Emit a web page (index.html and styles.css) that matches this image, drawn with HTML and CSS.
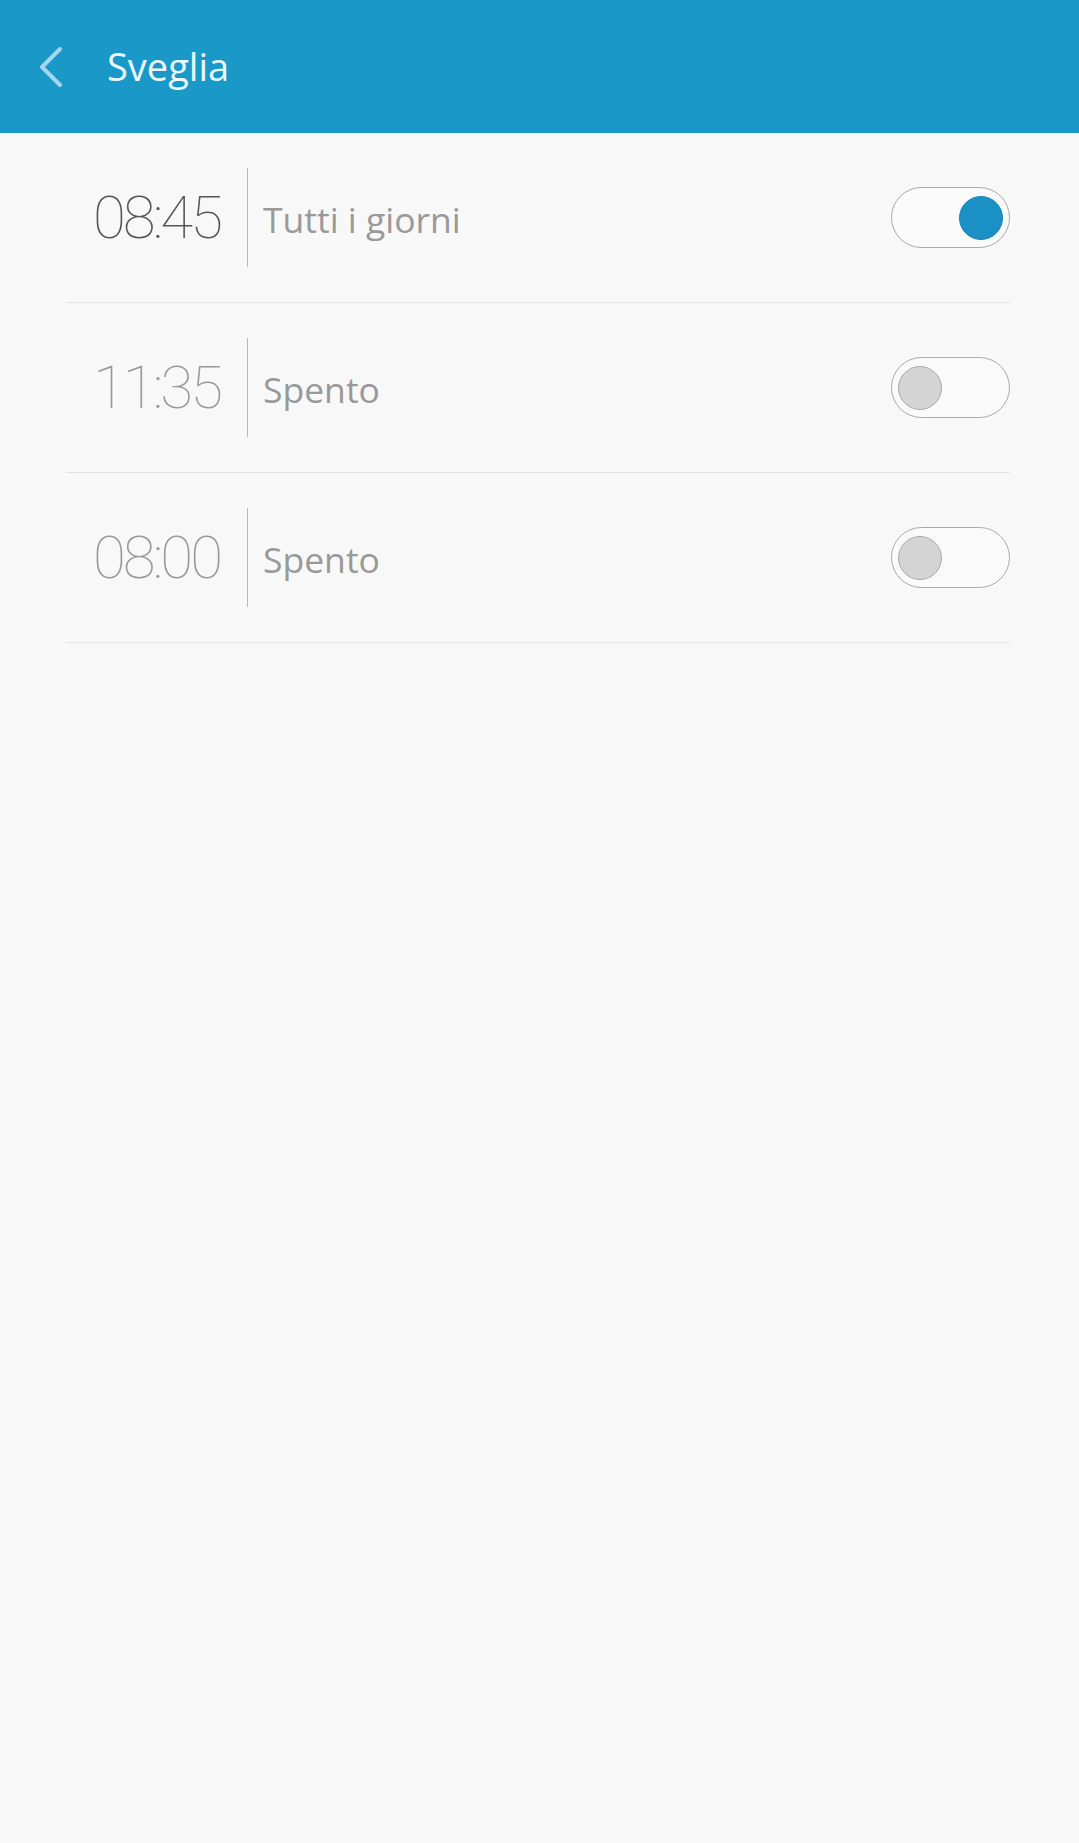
FILE: index.html
```html
<!DOCTYPE html>
<html lang="it">
<head>
    <meta charset="UTF-8">
    <meta name="viewport" content="width=device-width, initial-scale=1.0">
    <title>Sveglia</title>
    <link rel="stylesheet" href="styles.css">
</head>

<body>
    <header class="topbar">
        <button class="back" aria-label="Indietro">
            <svg width="30" height="44" viewBox="0 0 30 44">
                <polyline points="24,4 6,22 24,40" fill="none" stroke="#a6d6ef" stroke-width="4" stroke-linecap="round" stroke-linejoin="round"/>
            </svg>
        </button>
        <h1>Sveglia</h1>
    </header>

    <ul class="alarms">
        <li class="alarm on">
            <span class="time">08:45</span>
            <span class="divider"></span>
            <span class="label">Tutti i giorni</span>
            <span class="switch"><span class="knob"></span></span>
        </li>
        <li class="alarm">
            <span class="time">11:35</span>
            <span class="divider"></span>
            <span class="label">Spento</span>
            <span class="switch"><span class="knob"></span></span>
        </li>
        <li class="alarm">
            <span class="time">08:00</span>
            <span class="divider"></span>
            <span class="label">Spento</span>
            <span class="switch"><span class="knob"></span></span>
        </li>
    </ul>
</body>

</html>
```

FILE: styles.css
```css
body {
    margin: 0;
    background-color: #f8f8f8;
    font-family: 'Open Sans', 'DejaVu Sans', sans-serif;
    min-height: 100vh;
}

.topbar {
    background-color: #1a99c8;
    height: 133px;
    display: flex;
    align-items: center;
}

.back {
    background: none;
    border: none;
    padding: 0;
    margin-left: 36px;
    width: 30px;
    height: 44px;
    display: flex;
    cursor: pointer;
}

h1 {
    margin: 0 0 0 41px;
    color: #e9f8ff;
    font-size: 38px;
    font-weight: 400;
    padding-bottom: 2px;
}

.alarms {
    list-style: none;
    margin: 0 69px 0 66px;
    padding: 0;
}

.alarm {
    height: 169px;
    border-bottom: 1px solid #e4e4e4;
    display: flex;
    align-items: center;
}

.time {
    width: 154px;
    text-align: right;
    font-family: Roboto, sans-serif;
    font-weight: 100;
    font-size: 60px;
    color: #999;
    letter-spacing: -3px;
}

.alarm.on .time {
    color: #555;
}

.divider {
    width: 1px;
    height: 99px;
    background-color: #b8b8b8;
    margin: 0 15px 0 27px;
}

.label {
    flex: 1;
    font-size: 35.5px;
    color: #999;
    padding-top: 3px;
}

.switch {
    height: 59px;
    border: 1.5px solid #aaa;
    border-radius: 31px;
    background-color: #fafafa;
    display: flex;
    align-items: center;
    padding: 0 6px;
    box-sizing: content-box;
    width: 105px;
}

.knob {
    width: 42px;
    height: 42px;
    border-radius: 50%;
    background-color: #d4d4d4;
    border: 1px solid #aaa;
}

.alarm.on .knob {
    margin-left: auto;
    background-color: #1a90c4;
    border-color: #1a86b8;
}
```
